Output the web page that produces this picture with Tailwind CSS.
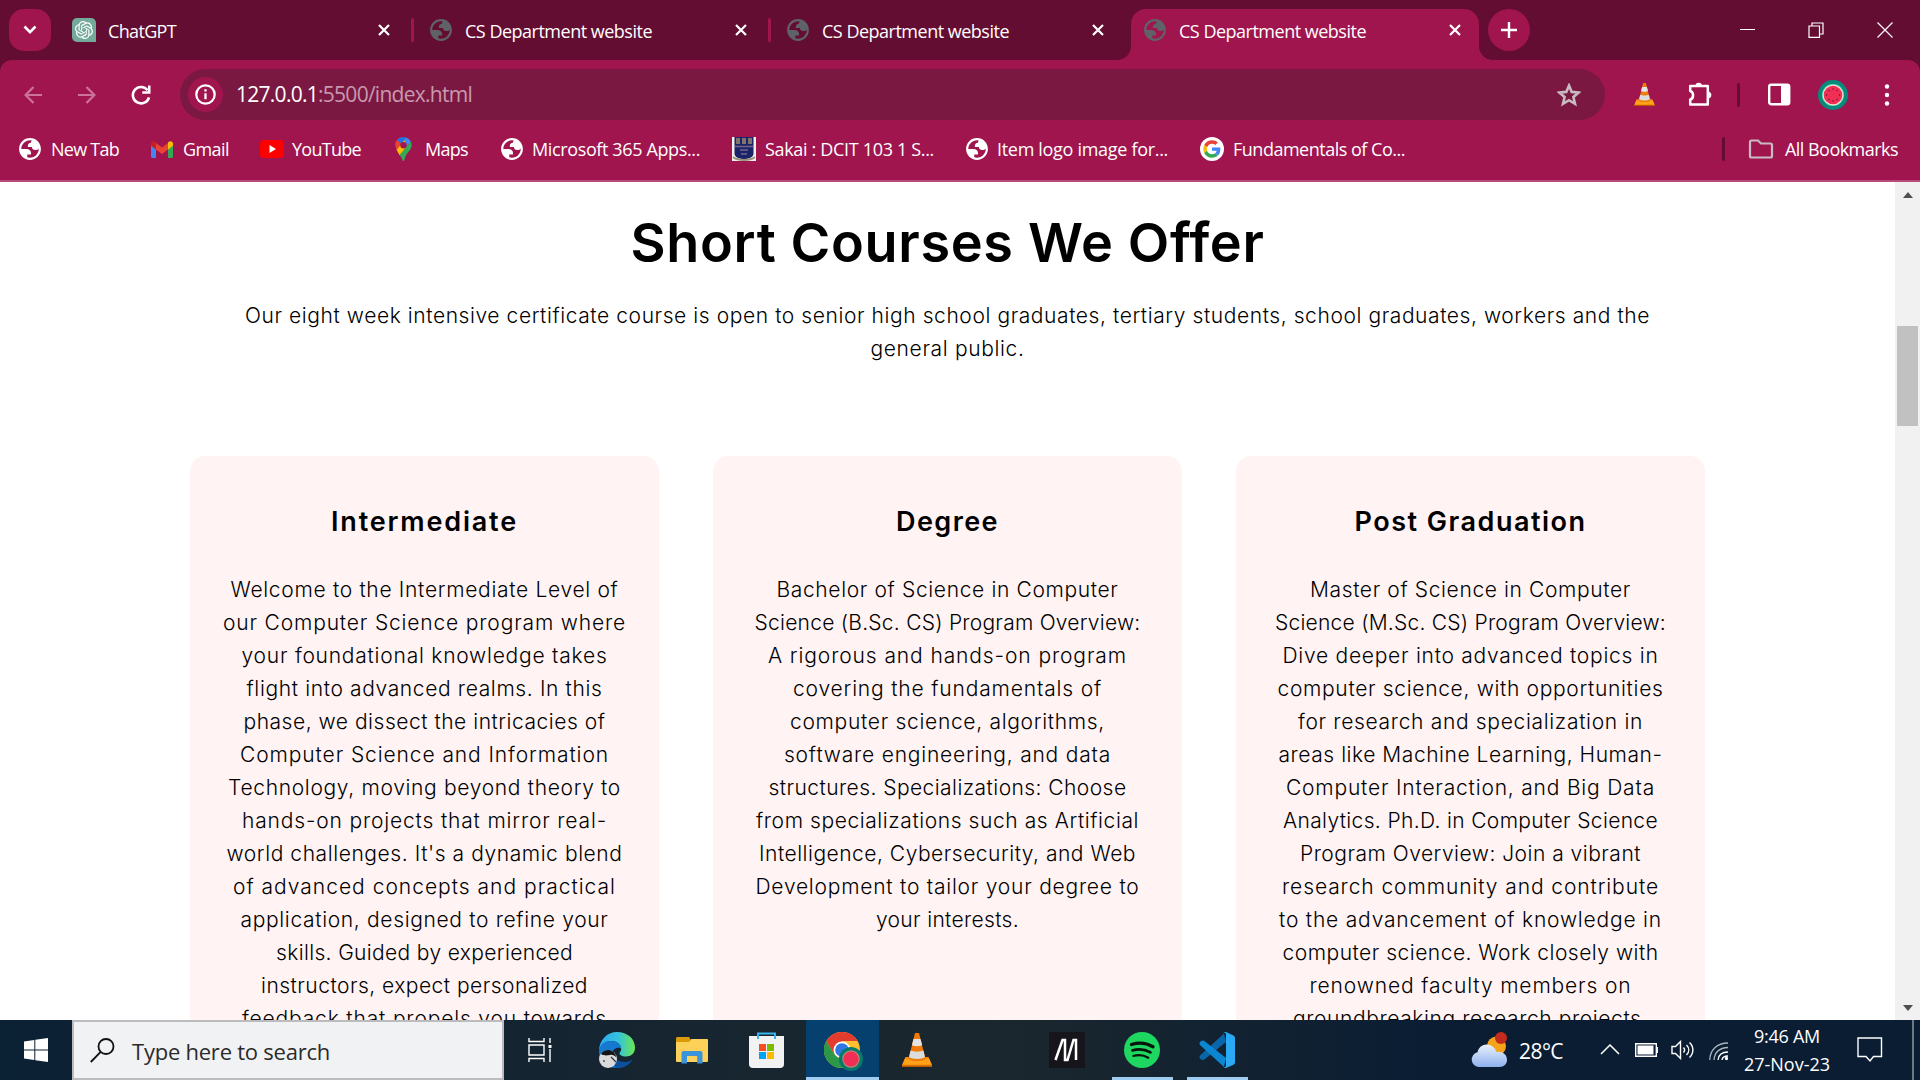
<!DOCTYPE html>
<html lang="en">
<head>
<meta charset="utf-8">
<title>CS Department website</title>
<script src="https://cdn.jsdelivr.net/npm/@tailwindcss/browser@4"></script>
</head>
<body class="w-[1920px] h-[1080px] overflow-hidden bg-white text-white font-['Open_Sans','Noto_Sans',sans-serif]">
<svg class="hidden">
  <symbol id="globe" viewBox="1 1 22 22"><path fill="currentColor" fill-rule="evenodd" d="M12 2C6.48 2 2 6.48 2 12s4.48 10 10 10 10-4.48 10-10S17.52 2 12 2zM4 12h4.4c3.407.022 4.922 1.73 4.543 5.127H9.488v2.47a8.004 8.004 0 0 0 10.498-8.08C19.327 12.507 18.332 13 17 13c-2.137 0-3.206-.916-3.206-2.75h-3.748c-.274-2.728.683-4.092 2.87-4.092 0-.975.327-1.597.811-1.97A8.004 8.004 0 0 0 4 12z"/></symbol>
  <symbol id="close" viewBox="0 0 12 12"><path d="M1 1l10 10M11 1L1 11" stroke="currentColor" stroke-width="2.2" fill="none"/></symbol>
  <symbol id="cone" viewBox="0 0 30 34">
    <path d="M3.500 24h23L30 32v2H0v-2z" fill="#f58a0b"/><path d="M0 32.500h30V34H0z" fill="#b85800"/><path d="M2.800 26h24.400l2.200 5.500H.6z" fill="#ffa21a"/>
    <path d="M13 0h4l6.500 26c-3 3-14 3-17 0z" fill="#f07a08"/>
    <path d="M11.500 6h7l1.600 6c-2 1.600-8.200 1.600-10.200 0z" fill="#e4e4e4"/><path d="M8.600 17.500c3 1.500 9.800 1.500 12.800 0l1.600 6.500c-3 2.500-13 2.500-16 0z" fill="#dcdcdc"/>
  </symbol>
  <symbol id="melon" viewBox="0 0 30 30"><circle cx="15" cy="15" r="15" fill="#07897b"/><circle cx="15" cy="15" r="11" fill="#5fdcb4"/><circle cx="15" cy="15" r="10.300" fill="#fbe3d6"/><circle cx="15" cy="15" r="9.300" fill="#f02e56"/><g fill="#5b1530"><circle cx="15" cy="9" r=".7"/><circle cx="19" cy="10.500" r=".7"/><circle cx="21.500" cy="15" r=".7"/><circle cx="19" cy="19.500" r=".7"/><circle cx="15" cy="21" r=".7"/><circle cx="11" cy="19.500" r=".7"/><circle cx="8.500" cy="15" r=".7"/><circle cx="11" cy="10.500" r=".7"/></g></symbol>
</svg>

<div class="flex flex-col h-[1080px]">
  <!-- Tab strip -->
  <header class="flex h-[60px] shrink-0 bg-[#640d32] pl-[9px] pt-[9px] text-[18px]">
    <button class="flex items-center justify-center size-[42px] rounded-[15px] bg-[#a0154e] shrink-0"><svg width="14" height="10" viewBox="0 0 14 10"><path d="M1.500 1.500L7 7.200l5.500-5.700" fill="none" stroke="#fff" stroke-width="2.600"/></svg></button>
    <div class="flex items-center h-[42px] w-[363px] pl-[21px]">
      <svg class="size-6 rounded-[5px] rounded-br-none bg-[#74aa9c] p-[3px]" viewBox="0 0 24 24"><path fill="#fff" d="M22.2819 9.8211a5.9847 5.9847 0 0 0-.5157-4.9108 6.0462 6.0462 0 0 0-6.5098-2.9A6.0651 6.0651 0 0 0 4.9807 4.1818a5.9847 5.9847 0 0 0-3.9977 2.9 6.0462 6.0462 0 0 0 .7427 7.0966 5.98 5.98 0 0 0 .511 4.9107 6.051 6.051 0 0 0 6.5146 2.9001A5.9847 5.9847 0 0 0 13.2599 24a6.0557 6.0557 0 0 0 5.7718-4.2058 5.9894 5.9894 0 0 0 3.9977-2.9001 6.0557 6.0557 0 0 0-.7475-7.0729zm-9.022 12.6081a4.4755 4.4755 0 0 1-2.8764-1.0408l.1419-.0804 4.7783-2.7582a.7948.7948 0 0 0 .3927-.6813v-6.7369l2.02 1.1686a.071.071 0 0 1 .038.052v5.5826a4.504 4.504 0 0 1-4.4945 4.4944zm-9.6607-4.1254a4.4708 4.4708 0 0 1-.5346-3.0137l.142.0852 4.783 2.7582a.7712.7712 0 0 0 .7806 0l5.8428-3.3685v2.3324a.0804.0804 0 0 1-.0332.0615L9.74 19.9502a4.4992 4.4992 0 0 1-6.1408-1.6464zM2.3408 7.8956a4.485 4.485 0 0 1 2.3655-1.9728V11.6a.7664.7664 0 0 0 .3879.6765l5.8144 3.3543-2.0201 1.1685a.0757.0757 0 0 1-.071 0l-4.8303-2.7865A4.504 4.504 0 0 1 2.3408 7.872zm16.5963 3.8558L13.1038 8.364 15.1192 7.2a.0757.0757 0 0 1 .071 0l4.8303 2.7913a4.4944 4.4944 0 0 1-.6765 8.1042v-5.6772a.79.79 0 0 0-.407-.667zm2.0107-3.0231l-.142-.0852-4.7735-2.7818a.7759.7759 0 0 0-.7854 0L9.409 9.2297V6.8974a.0662.0662 0 0 1 .0284-.0615l4.8303-2.7866a4.4992 4.4992 0 0 1 6.6802 4.66zM8.3065 12.863l-2.02-1.1638a.0804.0804 0 0 1-.038-.0567V6.0742a4.4992 4.4992 0 0 1 7.3757-3.4537l-.142.0805L8.704 5.459a.7948.7948 0 0 0-.3927.6813zm1.0976-2.3654l2.602-1.4998 2.6069 1.4998v2.9994l-2.5974 1.4997-2.6067-1.4997Z"/></svg>
      <span class="ml-3 mt-[2px] whitespace-nowrap" data-w="68">ChatGPT</span>
      <svg class="ml-auto mr-[21px] size-3"><use href="#close"/></svg>
      <i class="w-[3px] h-6 rounded bg-[#a0154e]"></i>
    </div>
    <div class="flex items-center h-[42px] w-[357px] pl-[15px]">
      <svg class="size-[24px] text-[#5f6368]"><use href="#globe"/></svg>
      <span class="ml-[12px] mt-[2px] whitespace-nowrap" data-w="187">CS Department website</span>
      <svg class="ml-auto mr-[21px] size-3"><use href="#close"/></svg>
      <i class="w-[3px] h-6 rounded bg-[#a0154e]"></i>
    </div>
    <div class="flex items-center h-[42px] w-[360px] pl-[15px]">
      <svg class="size-[24px] text-[#5f6368]"><use href="#globe"/></svg>
      <span class="ml-[12px] mt-[2px] whitespace-nowrap" data-w="187">CS Department website</span>
      <svg class="ml-auto mr-[27px] size-3"><use href="#close"/></svg>
    </div>
    <div class="relative flex items-center h-[51px] w-[348px] pl-[12px] pb-[9px] bg-[#a0154e] rounded-t-[15px]">
      <svg class="absolute -left-[14px] bottom-0" width="14" height="14"><path d="M14 0v14H0A14 14 0 0 0 14 0z" fill="#a0154e"/></svg>
      <svg class="absolute -right-[14px] bottom-0" width="14" height="14"><path d="M0 0v14h14A14 14 0 0 1 0 0z" fill="#a0154e"/></svg>
      <svg class="size-[24px] text-[#5f6368]"><use href="#globe"/></svg>
      <span class="ml-[12px] mt-[2px] whitespace-nowrap" data-w="187">CS Department website</span>
      <svg class="ml-auto mr-[18px] size-3"><use href="#close"/></svg>
    </div>
    <button class="ml-[9px] flex items-center justify-center size-[42px] rounded-full bg-[#a0154e] shrink-0"><svg width="16" height="16"><path d="M8 0v16M0 8h16" stroke="#fff" stroke-width="2.400"/></svg></button>
    <div class="ml-auto flex items-center h-[41px] gap-[53px] pr-[27px]">
      <svg width="15" height="15"><path d="M0 7h15v1H0z" fill="#fff"/></svg>
      <svg width="16" height="16" fill="none" stroke="#fff" stroke-width="1.200"><path d="M1 4h10.500v11.300H1zM4 4V1h11v11h-3.500"/></svg>
      <svg width="16" height="16"><path d="M.5.500l15 15M15.500.500l-15 15" stroke="#fff" stroke-width="1.200"/></svg>
    </div>
  </header>

  <!-- Address bar -->
  <div class="bg-[#640d32] shrink-0">
  <div class="flex items-center h-[69px] rounded-t-[12px] bg-[#a0154e] pl-6">
    <svg class="shrink-0" width="18" height="18" fill="none" stroke="#cb739a" stroke-width="2.200"><path d="M18 9H2M9.500 1L1.600 9l7.900 8"/></svg>
    <svg class="ml-9 shrink-0" width="18" height="18" fill="none" stroke="#cb739a" stroke-width="2.200"><path d="M0 9h16M8.500 1l7.900 8-7.900 8"/></svg>
    <svg class="ml-[35px] shrink-0" width="20" height="20" viewBox="0 0 20 20" fill="none"><path d="M16.600 5.200A8.200 8.200 0 1 0 18 12.300" stroke="#fff" stroke-width="2.600"/><path d="M19.500.500v8.200h-8.200V6.200H17V.500z" fill="#fff"/></svg>
    <div class="ml-[29px] flex items-center h-[51px] w-[1425px] rounded-full bg-[#7b1842] pl-[8px] pr-[24px]">
      <div class="flex items-center justify-center size-[35px] rounded-full bg-[#a0154e]"><svg width="21" height="21" fill="none" stroke="#fff" stroke-width="2.300"><circle cx="10.500" cy="10.500" r="9.200"/><path d="M10.500 9.300v6M10.500 5.200v2.300"/></svg></div>
      <p class="ml-[13px] text-[21px] text-[#c999ae] whitespace-nowrap" data-w="236"><span class="text-white">127.0.0.1</span>:5500/index.html</p>
      <svg class="ml-auto" width="24" height="24" viewBox="0 0 24 24"><path d="M12 2.600l2.700 6.300 6.900.6-5.200 4.500 1.600 6.800L12 17.200l-6 3.600 1.600-6.800L2.400 9.500l6.900-.6z" fill="none" stroke="#c8bcc2" stroke-width="2.600"/></svg>
    </div>
    <svg class="ml-[29px]" width="21" height="23"><use href="#cone"/></svg>
    <svg class="ml-[32px]" width="26" height="26" viewBox="0 0 26 26"><path d="M3.200 4h17.600v18.500H3.200v-5c3.600-.7 4-7.500 0-8.500z" fill="none" stroke="#fff" stroke-width="2.500" stroke-linejoin="round"/><path d="M8.500 4a3.200 3.200 0 0 1 6.400 0zM21 9.500c4.500.2 4.500 7 0 7z" fill="#fff"/></svg>
    <i class="ml-[24px] w-[3px] h-6 rounded bg-[#640d32]"></i>
    <svg class="ml-[28px]" width="23" height="23"><rect x="1.200" y="1.700" width="20" height="19.600" rx="2" fill="none" stroke="#fff" stroke-width="2.400"/><path d="M13 1h8v21h-8z" fill="#fff"/></svg>
    <svg class="ml-[27px]" width="30" height="30"><use href="#melon"/></svg>
    <svg class="ml-[36px]" width="6" height="24" fill="#fff"><circle cx="3" cy="3.500" r="2.200"/><circle cx="3" cy="12" r="2.200"/><circle cx="3" cy="20.500" r="2.200"/></svg>
  </div>
  </div>

  <!-- Bookmarks -->
  <nav class="flex items-center h-[53px] pb-[11px] pl-[18px] shrink-0 bg-[#a0154e] border-b-2 border-[#b94b78] text-[18px] whitespace-nowrap leading-6">
    <a class="flex items-center w-[133px] shrink-0"><span class="w-[33px] shrink-0"><svg class="size-[24px]"><use href="#globe"/></svg></span><span data-w="68">New Tab</span></a>
    <a class="flex items-center w-[109px] shrink-0"><span class="w-8 shrink-0"><svg width="22" height="17" viewBox="0 0 22 17"><path d="M0 3v12.500A1.500 1.500 0 0 0 1.500 17H5V6z" fill="#4285f4"/><path d="M22 3v12.500a1.500 1.500 0 0 1-1.500 1.500H17V6z" fill="#34a853"/><path d="M5 2v6.500l6 4.600 6-4.600V2l-6 4.600z" fill="#ea4335"/><path d="M0 3C0 .5 2.500-.5 4.500.9L5 1.500v7L0 4.800z" fill="#c5221f"/><path d="M22 3c0-2.500-2.500-3.500-4.500-2.100l-.5.600v7l5-3.700z" fill="#fbbc04"/></svg></span><span data-w="46">Gmail</span></a>
    <a class="flex items-center w-[135px] shrink-0"><span class="w-[32px] shrink-0"><svg width="24" height="18"><rect width="24" height="18" rx="4" fill="#f00"/><path d="M9.500 5l6.500 4-6.500 4z" fill="#fff"/></svg></span><span data-w="69">YouTube</span></a>
    <a class="flex items-center w-[105px] shrink-0"><span class="w-[30px] shrink-0"><svg width="17" height="24" viewBox="0 0 17 24"><path d="M8.500 0A8.500 8.500 0 0 0 2 3l4 3.400z" fill="#ea4335"/><path d="M8.500 0C6 0 3.500 1.200 2 3l4 3.400L11 .4A8 8 0 0 0 8.500 0z" fill="#1a73e8"/><path d="M2 3C-.6 6 0 9.500 1.600 12.800L6.500 7z" fill="#ea4335"/><path d="M11 .4L6 6.400l5 4.600 4.800-6.600A8 8 0 0 0 11 .4z" fill="#4285f4"/><path d="M1.600 12.800l8-9.500 1.900 7-6.900 8c-.8-1.700-2-3.300-3-5.500z" fill="#fbbc04"/><path d="M15.800 4.400c2.700 6-1.800 9.400-4.400 13.200C9.800 20 9.800 24 8.500 24s-1.300-3-3.900-5.700z" fill="#34a853"/><circle cx="8.500" cy="8.300" r="3.200" fill="#a0154e"/></svg></span><span data-w="43">Maps</span></a>
    <a class="flex items-center w-[232px] shrink-0"><span class="w-[32px] shrink-0"><svg class="size-[24px]"><use href="#globe"/></svg></span><span data-w="168">Microsoft 365 Apps...</span></a>
    <a class="flex items-center w-[233px] shrink-0"><span class="w-[33px] shrink-0"><svg width="24" height="24"><path d="M0 0h24v24H0z" fill="#f4f1ea"/><path d="M2.500 0h19v17c0 3-5 5-9.500 5s-9.500-2-9.500-5z" fill="#1b2468"/><path d="M5 1v6M7 1v6M11 1v6M13 1v6M17 1v6M19 1v6" stroke="#b79e72" stroke-width="1.300"/><path d="M3 9.500h18M8 13h8M9 17h6" stroke="#75658a" stroke-width="1.600"/><path d="M1 20c5 4 17 4 22 0" stroke="#99937a" stroke-width="2" fill="none"/></svg></span><span data-w="169">Sakai : DCIT 103 1 S...</span></a>
    <a class="flex items-center w-[235px] shrink-0"><span class="w-[32px] shrink-0"><svg class="size-[24px]"><use href="#globe"/></svg></span><span data-w="171">Item logo image for...</span></a>
    <a class="flex items-center w-[210px] shrink-0"><span class="w-[33px] shrink-0"><svg width="24" height="24" viewBox="-9 -9 66 66"><circle cx="24" cy="24" r="33" fill="#fff"/><path fill="#EA4335" d="M24 9.500c3.540 0 6.710 1.220 9.210 3.600l6.850-6.850C35.900 2.380 30.470 0 24 0 14.620 0 6.510 5.380 2.560 13.220l7.980 6.190C12.430 13.720 17.740 9.500 24 9.500z"/><path fill="#4285F4" d="M46.980 24.550c0-1.570-.15-3.090-.38-4.550H24v9.020h12.940c-.58 2.960-2.260 5.480-4.780 7.180l7.730 6c4.510-4.180 7.090-10.360 7.090-17.650z"/><path fill="#FBBC05" d="M10.530 28.590c-.48-1.450-.76-2.990-.76-4.590s.27-3.140.76-4.590l-7.980-6.190C.92 16.460 0 20.120 0 24c0 3.880.92 7.540 2.560 10.780l7.970-6.190z"/><path fill="#34A853" d="M24 48c6.480 0 11.930-2.130 15.890-5.810l-7.730-6c-2.150 1.450-4.920 2.300-8.160 2.300-6.260 0-11.570-4.220-13.470-9.910l-7.980 6.190C6.510 42.620 14.620 48 24 48z"/></svg></span><span data-w="172">Fundamentals of Co...</span></a>
    <i class="ml-auto w-[3px] h-6 rounded bg-[#640d32]"></i>
    <a class="flex items-center ml-[23px] mr-[22px]"><svg width="26" height="20" viewBox="0 0 26 20"><path d="M2 3.500C2 2.500 2.500 1.500 3.500 1.500H10l3 3h9.500c1 0 1.500.6 1.500 1.500v11c0 1-.5 1.500-1.500 1.500h-19C2.500 18.500 2 18 2 17z" fill="none" stroke="#c8bcc2" stroke-width="2.200"/></svg><span class="ml-[11px]" data-w="113">All Bookmarks</span></a>
  </nav>

  <!-- Page -->
  <div class="flex h-[838px] shrink-0 overflow-hidden bg-white text-black font-['Inter','Open_Sans',sans-serif]">
    <main class="flex flex-col items-center w-[1895px] h-full overflow-hidden whitespace-nowrap text-center">
      <h1 class="mt-[24px] h-[74px] text-[54px] leading-[74px] font-semibold" data-w="634">Short Courses We Offer</h1>
      <div class="mt-[19px] flex flex-col items-center text-[21px] leading-[33px] font-light">
        <p data-w="1405">Our eight week intensive certificate course is open to senior high school graduates, tertiary students, school graduates, workers and the</p>
        <p data-w="154">general public.</p>
      </div>
      <section class="mt-[91px] grid grid-cols-3 gap-[54px] w-[1515px] h-[700px] shrink-0 text-[21px] leading-[33px] font-light">
        <article class="flex flex-col items-center rounded-[15px] bg-[#fff3f3] pt-[49px]">
          <h3 class="text-[27px] leading-[33px] font-semibold mb-[35px]" data-w="187">Intermediate</h3>
          <p data-w="388">Welcome to the Intermediate Level of</p>
          <p data-w="403">our Computer Science program where</p>
          <p data-w="366">your foundational knowledge takes</p>
          <p data-w="356">flight into advanced realms. In this</p>
          <p data-w="362">phase, we dissect the intricacies of</p>
          <p data-w="369">Computer Science and Information</p>
          <p data-w="393">Technology, moving beyond theory to</p>
          <p data-w="365">hands-on projects that mirror real-</p>
          <p data-w="396">world challenges. It's a dynamic blend</p>
          <p data-w="383">of advanced concepts and practical</p>
          <p data-w="368">application, designed to refine your</p>
          <p data-w="297">skills. Guided by experienced</p>
          <p data-w="327">instructors, expect personalized</p>
          <p data-w="365">feedback that propels you towards</p>
        </article>
        <article class="flex flex-col items-center rounded-[15px] bg-[#fff3f3] pt-[49px]">
          <h3 class="text-[27px] leading-[33px] font-semibold mb-[35px]" data-w="103">Degree</h3>
          <p data-w="342">Bachelor of Science in Computer</p>
          <p data-w="386">Science (B.Sc. CS) Program Overview:</p>
          <p data-w="359">A rigorous and hands-on program</p>
          <p data-w="309">covering the fundamentals of</p>
          <p data-w="315">computer science, algorithms,</p>
          <p data-w="327">software engineering, and data</p>
          <p data-w="358">structures. Specializations: Choose</p>
          <p data-w="383">from specializations such as Artificial</p>
          <p data-w="377">Intelligence, Cybersecurity, and Web</p>
          <p data-w="384">Development to tailor your degree to</p>
          <p data-w="143">your interests.</p>
        </article>
        <article class="flex flex-col items-center rounded-[15px] bg-[#fff3f3] pt-[49px]">
          <h3 class="text-[27px] leading-[33px] font-semibold mb-[35px]" data-w="232">Post Graduation</h3>
          <p data-w="321">Master of Science in Computer</p>
          <p data-w="391">Science (M.Sc. CS) Program Overview:</p>
          <p data-w="376">Dive deeper into advanced topics in</p>
          <p data-w="386">computer science, with opportunities</p>
          <p data-w="345">for research and specialization in</p>
          <p data-w="384">areas like Machine Learning, Human-</p>
          <p data-w="369">Computer Interaction, and Big Data</p>
          <p data-w="375">Analytics. Ph.D. in Computer Science</p>
          <p data-w="341">Program Overview: Join a vibrant</p>
          <p data-w="377">research community and contribute</p>
          <p data-w="383">to the advancement of knowledge in</p>
          <p data-w="376">computer science. Work closely with</p>
          <p data-w="322">renowned faculty members on</p>
          <p data-w="355">groundbreaking research projects.</p>
        </article>
      </section>
    </main>
    <aside class="flex flex-col items-center w-[25px] h-full bg-[#f1f1f1] pt-[10px] pb-[9px]">
      <svg width="10" height="6"><path d="M5 0l5 6H0z" fill="#505050"/></svg>
      <div class="mt-[128px] w-[21px] h-[100px] bg-[#c1c1c1]"></div>
      <svg class="mt-auto" width="10" height="6"><path d="M0 0h10L5 6z" fill="#505050"/></svg>
    </aside>
  </div>

  <!-- Taskbar -->
  <footer class="flex h-[60px] shrink-0 bg-linear-to-r from-[#0b2134] from-0% via-[#1b272e] via-52% to-[#0a1d33] to-75%">
    <div class="flex items-center justify-center w-[72px]"><svg width="24" height="24" viewBox="0 0 24 24" fill="#fff"><path d="M0 3.400l10.300-1.500v9.600H0zM11.300 1.700L24 0v11.500H11.300zM0 12.500h10.300v9.600L0 20.600zM11.300 12.500H24V24l-12.700-1.700z"/></svg></div>
    <div class="flex items-center w-[432px] border-2 border-[#bcbcbe] bg-[#f1f2f4] pl-4 text-[#2b2b2b] text-[22px]">
      <svg width="25" height="25" fill="none" stroke="#111" stroke-width="1.800"><circle cx="16" cy="8.500" r="7.500"/><path d="M10.700 13.800L.8 24"/></svg>
      <span class="ml-[17px] mt-[2px] whitespace-nowrap" data-w="198">Type here to search</span>
    </div>
    <div class="flex items-center justify-center w-[72px]"><svg width="24" height="24" fill="none" stroke="#fff" stroke-width="1.400"><path d="M1 0v3.500h15V0M1 24v-3.500h15V24M1 7h15v10H1zM22 0v5M22 11v13"/><path d="M20.500 7h3v3h-3z" fill="#fff" stroke="none"/></svg></div>
    <div class="flex items-center justify-center w-[82px]"><svg width="36" height="36" viewBox="0 0 36 36"><defs><linearGradient id="ed" x1="0" x2="1"><stop offset="0" stop-color="#2fa4ee"/><stop offset=".55" stop-color="#35c4da"/><stop offset="1" stop-color="#6be84e"/></linearGradient></defs><path d="M0 19C0 8 8 0 18 0c10.500 0 18 7 18 15.500 0 6-4 9-9 9-4 0-6.500-1.500-6.500-3 0-1 1.700-2 1.700-5C22 12 17 9 12.500 9 6 9 2 13 0 19z" fill="url(#ed)"/><path d="M0 19c1-7 6-10 11.500-10 6 0 10.500 3.500 10.700 7.500-2-1.500-8-1-9 5C12 30 20 35 26 34c-3 2-18 5-24-7-1.300-3-2-5-2-8z" fill="#1579d0"/><path d="M13.500 20c0 6 6 10 12 10 4 0 6-1.500 8-2.500-2 4-7 8.500-14 8.500-5 0-8-7-6-16z" fill="#0c4f9c"/><circle cx="9" cy="27" r="9" fill="#dadada"/><path d="M2 22c1.500-3 5-4.500 8.500-4 3.500.8 6 3.500 7 7.500-2.500-2-3.500-3-6.500-2.500-3 .5-6 1-9-1z" fill="#141414"/><path d="M12 25l5 5M5 28v2" stroke="#333" stroke-width="1.200"/></svg></div>
    <div class="flex items-center justify-center w-[68px]"><svg width="32" height="27" viewBox="0 0 32 27"><path d="M0 1.500C0 .7.700 0 1.500 0H13l2 3-2 3H0z" fill="#dc9a06"/><path d="M0 5h13l2.500-3H31a1 1 0 0 1 1 1v21a1 1 0 0 1-1 1H1a1 1 0 0 1-1-1z" fill="#fdd059"/><path d="M5.500 26.500V16c0-1.200.8-2 2-2h17c1.200 0 2 .8 2 2v10.500h-5.300V19H11v7.500z" fill="#3b93da"/></svg></div>
    <div class="flex items-center justify-center w-[80px]"><svg width="35" height="36" viewBox="0 0 35 36"><path d="M0 4h35v28a4 4 0 0 1-4 4H4a4 4 0 0 1-4-4z" fill="#f2f2f2"/><path d="M9 7V1.500h17V7" fill="none" stroke="#35b5ee" stroke-width="2"/><path d="M10 12h7v7h-7z" fill="#f25022"/><path d="M18 12h7v7h-7z" fill="#7fba00"/><path d="M10 20h7v7h-7z" fill="#00a4ef"/><path d="M18 20h7v7h-7z" fill="#ffb900"/></svg></div>
    <div class="flex items-center justify-center w-[73px] bg-[#05406f] border-b-[3px] border-[#9fcdf2] pt-[6px] pl-[2px]"><svg width="40" height="40" viewBox="0 0 40 40"><circle cx="18" cy="18" r="18" fill="#fbc02d"/><path d="M18 9h15.600A18 18 0 0 0 2.400 9l7.800 13.500z" fill="#e33b2e"/><path d="M2.400 9A18 18 0 0 0 18 36l7.800-13.500H10.200z" fill="#2a9847"/><circle cx="18" cy="18" r="8.500" fill="#fff"/><circle cx="18" cy="18" r="6.800" fill="#2f78e4"/><circle cx="27" cy="27" r="12" fill="#07786c"/><circle cx="27" cy="27" r="8.700" fill="#b78a75"/><circle cx="27" cy="27" r="7.600" fill="#f02e56"/></svg></div>
    <div class="flex items-center justify-center w-[75px]"><svg width="30" height="34"><use href="#cone"/></svg></div>
    <div class="flex items-center justify-center w-[73px] ml-[77px] pr-[2px]"><svg width="36" height="36"><path d="M0 0h36v36H0z" fill="#15151b"/><path d="M6.500 28l7-20h2.500v20h2.500l6-20h2.500v20" fill="none" stroke="#fff" stroke-width="2.500"/></svg></div>
    <div class="flex items-center justify-center w-[61px] ml-[8px] border-b-[3px] border-[#9fcdf2] pt-[3px] pr-[2px]"><svg width="36" height="36" viewBox="0 0 36 36"><circle cx="18" cy="18" r="18" fill="#1ed760"/><g fill="none" stroke="#06140b" stroke-linecap="round"><path d="M7.500 12.500c7-2.200 15-1.500 21.500 2.200" stroke-width="3.300"/><path d="M8.500 18.400c6-1.800 12.500-1.200 18 2" stroke-width="2.700"/><path d="M9.300 24c5-1.400 10.500-.9 15 1.700" stroke-width="2.200"/></g></svg></div>
    <div class="flex items-center justify-center w-[61px] ml-[14px] border-b-[3px] border-[#9fcdf2] pt-[3px] pr-[1px]"><svg width="36" height="36" viewBox="0 0 36 36"><path d="M1.500 27a2.500 2.500 0 0 1 0-4L25 1.500 27 10 6 27c-1.500 1.200-3 1.200-4.500 0z" fill="#0a66a9"/><path d="M1.500 9.500a2.500 2.500 0 0 0 0 4L25 35l2-9L6 9.500c-1.500-1.200-3-1.200-4.500 0z" fill="#0b86d3"/><path d="M27 0l7 3.200c1.200.6 2 1.500 2 3v24c0 1.400-.8 2.300-2 2.800L27 36c-1 .2-2-.3-2.500-1 1.500.5 2.500 0 2.500-1.500v-31C27 1 26 .5 24.500 1c.5-.7 1.500-1.200 2.500-1z" fill="#2aaaf5"/></svg></div>

    <div class="ml-auto flex items-center">
      <svg width="37" height="36" viewBox="0 0 37 36"><defs><linearGradient id="cl" x1="0" y1="0" x2="0" y2="1"><stop offset="0" stop-color="#e9f1fc"/><stop offset="1" stop-color="#8fb1ee"/></linearGradient></defs><circle cx="25.500" cy="14" r="9.500" fill="#f5a31b"/><circle cx="30" cy="6" r="6" fill="#c42b1c"/><path d="M8 35a7.500 7.500 0 0 1-1.500-14.800C7.500 15 12 12 16.500 12.500c4 .3 7.500 3 9 7.500 6-1.500 10.500 2.500 10.500 8 0 4-3 7-7.500 7z" fill="url(#cl)"/></svg>
      <span class="ml-[11px] mt-[3px] text-[21px] whitespace-nowrap" data-w="44">28°C</span>
      <svg class="ml-[37px] mb-[2px]" width="20" height="11" fill="none" stroke="#fff" stroke-width="1.500"><path d="M1 10l9-9 9 9"/></svg>
      <svg class="ml-[15px]" width="24" height="14"><path d="M.7.700h20.600v12.600H.7z" fill="none" stroke="#fff" stroke-width="1.400"/><path d="M2.500 2.500h16v9h-16zM21 4h2v6h-2z" fill="#fff"/></svg>
      <svg class="ml-[12px]" width="24" height="20" fill="none" stroke="#fff" stroke-width="1.400"><path d="M1 6.500h3.500L9.500 1.500v17L4.500 13.500H1zM12.500 7.500c1.300 1.500 1.300 3.500 0 5M15.500 5c3 3 3 7 0 10M18.500 2.500c4.500 4 4.500 11 0 15"/></svg>
      <svg class="ml-[14px] mt-[2px]" width="20" height="19" fill="none" stroke="#fff" stroke-width="1.300"><g stroke="#aab5be"><path d="M.8 18C1 8 8 1 19 1"/><path d="M5 18C5.500 10.500 10 6 19 5.500"/></g><path d="M9 18c.5-5 4-8 10-8M13 18c.3-2.500 2-4 6-4"/><circle cx="17.500" cy="16.500" r="1" fill="#fff"/></svg>
      <div class="ml-[14px] flex flex-col items-center w-[88px] text-[18px] leading-[28px] whitespace-nowrap"><span data-w="66">9:46 AM</span><span data-w="86">27-Nov-23</span></div>
      <svg class="ml-[26px]" width="26" height="26" fill="none" stroke="#fff" stroke-width="1.400"><path d="M1 1h23.500v18.500h-8L13 24l-4-4.500H1z"/></svg>
      <i class="ml-[29px] mr-[6px] w-[2px] h-[60px] bg-[#6b7986]"></i>
    </div>
  </footer>
</div>
<script>
  function fitLabels() {
    document.querySelectorAll('[data-w]').forEach(function (el) {
      el.style.letterSpacing = '0px';
      var r = document.createRange();
      r.selectNodeContents(el);
      var natural = r.getBoundingClientRect().width;
      el.style.letterSpacing = ((el.dataset.w - natural) / el.textContent.length) + 'px';
    });
  }
  fitLabels();
  window.addEventListener('load', function () {
    fitLabels();
    requestAnimationFrame(fitLabels);
    document.fonts.ready.then(fitLabels);
    setTimeout(fitLabels, 100);
  });
</script>
</body>
</html>
